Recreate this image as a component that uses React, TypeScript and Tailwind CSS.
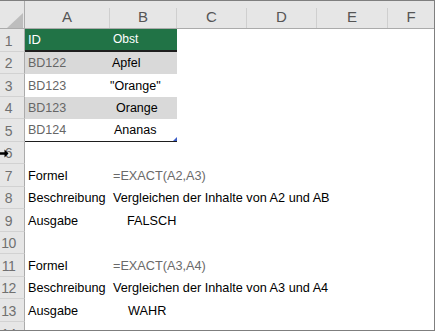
import React from 'react';

// column widths: row header, A..F
const COLS = [25, 85, 67, 70, 70, 71];
const LETTERS = ['A', 'B', 'C', 'D', 'E', 'F'];

type Row = {
  n: number;
  h: number;
  a?: string;
  b?: string;
  bPad?: string;
  kind?: 'head' | 'band' | 'plain' | 'last' | 'text';
  bGray?: boolean;
};

const ROWS: Row[] = [
  { n: 1, h: 23, a: 'ID', b: 'Obst', kind: 'head' },
  { n: 2, h: 22, a: 'BD122', b: 'Apfel', bPad: 'pl-[2px]', kind: 'band' },
  { n: 3, h: 23, a: 'BD123', b: '"Orange"', bPad: 'pl-0', kind: 'plain' },
  { n: 4, h: 22, a: 'BD123', b: 'Orange', bPad: 'pl-[6px]', kind: 'band' },
  { n: 5, h: 23, a: 'BD124', b: 'Ananas', bPad: 'pl-[4px]', kind: 'last' },
  { n: 6, h: 22 },
  { n: 7, h: 23, a: 'Formel', b: '=EXACT(A2,A3)', bPad: 'pl-[3px]', kind: 'text', bGray: true },
  { n: 8, h: 22, a: 'Beschreibung', b: 'Vergleichen der Inhalte von A2 und AB', bPad: 'pl-[3px]', kind: 'text' },
  { n: 9, h: 23, a: 'Ausgabe', b: 'FALSCH', bPad: 'pl-[17px]', kind: 'text' },
  { n: 10, h: 22 },
  { n: 11, h: 23, a: 'Formel', b: '=EXACT(A3,A4)', bPad: 'pl-[3px]', kind: 'text', bGray: true },
  { n: 12, h: 22, a: 'Beschreibung', b: 'Vergleichen der Inhalte von A3 und A4', bPad: 'pl-[3px]', kind: 'text' },
  { n: 13, h: 23, a: 'Ausgabe', b: 'WAHR', bPad: 'pl-[18px]', kind: 'text' },
  { n: 14, h: 23 },
];

function ColumnHeader() {
  return (
    <div className="flex h-[28px] border-b border-[#ababab] bg-[#e6e6e6]">
      {/* select-all corner */}
      <div className="relative w-[25px] shrink-0 border-r border-[#ababab]">
        <svg className="absolute left-[7px] top-[12px]" width="16" height="15" viewBox="0 0 16 15">
          <polygon points="16,0 16,15 0,15" fill="#bdbdbd" />
        </svg>
      </div>
      {LETTERS.map((l, i) => (
        <div
          key={l}
          style={{ width: i === LETTERS.length - 1 ? undefined : COLS[i + 1] }}
          className={`mt-[7px] flex items-center justify-center border-r border-[#cfcfcf] pb-[1px] text-[15px] text-[#555555] ${
            i === LETTERS.length - 1 ? 'flex-1 border-r-0' : 'shrink-0'
          }`}
        >
          {l}
        </div>
      ))}
    </div>
  );
}

function SheetRow({ row }: { row: Row }) {
  const k = row.kind;
  const fill =
    k === 'head' ? 'bg-[#217346]' : k === 'band' ? 'bg-[#d9d9d9]' : 'bg-transparent';
  const tableBorder =
    k === 'head' ? 'border-b-2 border-[#1e1e1e]' : k === 'last' ? 'border-b border-[#1e1e1e]' : '';
  const aText =
    k === 'head'
      ? 'text-white text-[13px]'
      : k === 'text'
        ? 'text-black text-[12.7px]'
        : 'text-[#666666] text-[12.5px]';
  const bText =
    k === 'head'
      ? 'pl-[3px] text-white text-[12px]'
      : k === 'text'
        ? `${row.bPad ?? ''} text-[12.7px] ${row.bGray ? 'text-[#6a6a6a]' : 'text-black'}`
        : `${row.bPad ?? ''} text-[12.5px] text-black`;

  return (
    <div className="flex" style={{ height: row.h }}>
      <div className="flex w-[25px] shrink-0 border-r border-b border-r-[#ababab] border-b-[#d2d2d2] bg-[#e6e6e6]">
        <span className="w-[17px] self-center pt-[1px] text-center text-[14px] leading-none tracking-[-0.5px] text-[#707070]">
          {row.n}
        </span>
      </div>
      <div className={`relative flex w-[152px] shrink-0 ${fill} ${tableBorder}`}>
        <div className={`flex w-[85px] shrink-0 items-end whitespace-nowrap pb-[3px] pl-[3px] leading-[15px] ${aText}`}>
          {row.a}
        </div>
        <div className={`flex w-[67px] shrink-0 items-end whitespace-nowrap pb-[3px] leading-[15px] ${bText}`}>
          {row.b}
        </div>
        {k === 'last' && (
          <svg className="absolute right-0 bottom-0" width="4" height="4" viewBox="0 0 4 4">
            <polygon points="4,0 4,4 0,4" fill="#3b5cc6" />
          </svg>
        )}
      </div>
      <div className="flex-1" />
    </div>
  );
}

export default function App() {
  return (
    <div
      className="relative h-[331px] w-[435px] overflow-hidden border-t border-r border-b border-[#7f7f7f] bg-white"
      style={{ fontFamily: '"Liberation Sans", Arial, sans-serif' }}
    >
      <ColumnHeader />
      {ROWS.map(r => (
        <SheetRow key={r.n} row={r} />
      ))}
      {/* move-cursor arrow resting over row 6 */}
      <svg className="absolute left-0 top-[148px]" width="9" height="9" viewBox="0 0 9 9">
        <path d="M0 3.2h4.5V0.5L8.5 4.5 4.5 8.5V5.8H0z" fill="#000" />
      </svg>
    </div>
  );
}
